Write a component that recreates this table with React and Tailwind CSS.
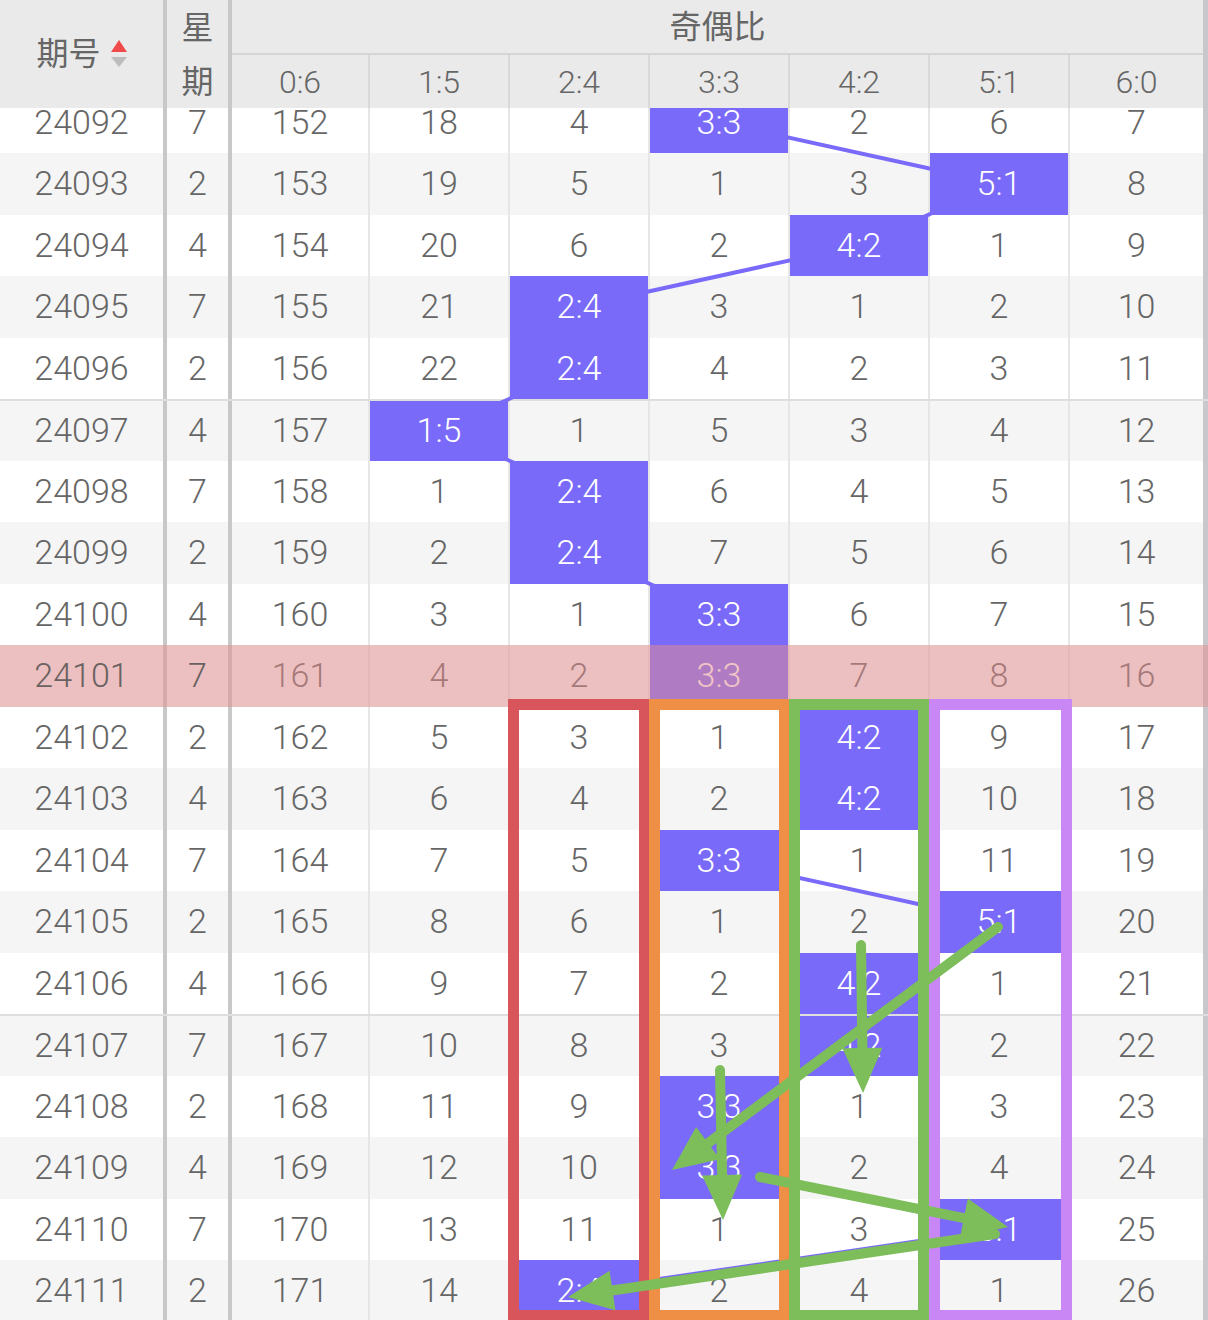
import React from "react";

const labels = ["0:6", "1:5", "2:4", "3:3", "4:2", "5:1", "6:0"];

// [期号, 星期, 命中列, 各列遗漏值]
const rows = [
    [24092, 7, 3, [152, 18, 4, 0, 2, 6, 7]],
    [24093, 2, 5, [153, 19, 5, 1, 3, 0, 8]],
    [24094, 4, 4, [154, 20, 6, 2, 0, 1, 9]],
    [24095, 7, 2, [155, 21, 0, 3, 1, 2, 10]],
    [24096, 2, 2, [156, 22, 0, 4, 2, 3, 11]],
    [24097, 4, 1, [157, 0, 1, 5, 3, 4, 12]],
    [24098, 7, 2, [158, 1, 0, 6, 4, 5, 13]],
    [24099, 2, 2, [159, 2, 0, 7, 5, 6, 14]],
    [24100, 4, 3, [160, 3, 1, 0, 6, 7, 15]],
    [24101, 7, 3, [161, 4, 2, 0, 7, 8, 16]],
    [24102, 2, 4, [162, 5, 3, 1, 0, 9, 17]],
    [24103, 4, 4, [163, 6, 4, 2, 0, 10, 18]],
    [24104, 7, 3, [164, 7, 5, 0, 1, 11, 19]],
    [24105, 2, 5, [165, 8, 6, 1, 2, 0, 20]],
    [24106, 4, 4, [166, 9, 7, 2, 0, 1, 21]],
    [24107, 7, 4, [167, 10, 8, 3, 0, 2, 22]],
    [24108, 2, 3, [168, 11, 9, 0, 1, 3, 23]],
    [24109, 4, 3, [169, 12, 10, 0, 2, 4, 24]],
    [24110, 7, 5, [170, 13, 11, 1, 3, 0, 25]],
    [24111, 2, 2, [171, 14, 0, 2, 4, 1, 26]],
];

const colW = ["w-[138px]", "w-[140px]", "w-[140px]", "w-[140px]", "w-[140px]", "w-[140px]", "w-[133px]"];
const colCenter = [301, 439, 579, 719, 859, 999, 1136];
const ROW_H = 61.5;
const FIRST_TOP = 91.5;
const rowCenter = (k) => FIRST_TOP + ROW_H * k + ROW_H / 2;

function SortIcon() {
    return (
        <svg width="16" height="28" viewBox="0 0 16 28">
            <polygon points="8,0 16,12 0,12" fill="#f04a4a"/>
            <polygon points="0,17 16,17 8,27" fill="#bdbdbd"/>
        </svg>
    );
}

function Header() {
    return (
        <div className="flex h-[108px] bg-[#eaeaea] text-[#666] text-[32px] font-normal">
            <div className="w-[167px] border-r-4 border-[#c8c8c8] flex items-center justify-center gap-[10px]">
                <span>期号</span>
                <SortIcon/>
            </div>
            <div className="w-[65px] border-r-4 border-[#c8c8c8] flex flex-col">
                <div className="h-[55px] flex items-center justify-center">星</div>
                <div className="h-[53px] flex items-center justify-center">期</div>
            </div>
            <div className="w-[971px] flex flex-col">
                <div className="h-[55px] border-b-2 border-[#d6d6d6] flex items-center justify-center">奇偶比</div>
                <div className="h-[53px] flex font-light">
                    {labels.map((l, i) => (
                        <div key={l}
                             className={`${colW[i]} ${i < 6 ? "border-r-2 border-[#d9d9d9]" : ""} flex items-center justify-center`}>
                            {l}
                        </div>
                    ))}
                </div>
            </div>
            <div className="w-[5px] bg-[#c8c8cc]"/>
        </div>
    );
}

function Row({row, k}) {
    const [issue, week, hit, vals] = row;
    const striped = k % 2 === 1;
    const divider = k === 5 || k === 15;
    const marked = issue === 24101;
    return (
        <div className={`relative flex h-[61.5px] ${striped ? "bg-[#f5f5f5]" : "bg-white"} ${divider ? "border-t-2 border-[#dedede]" : ""}`}>
            <div className="w-[167px] border-r-4 border-[#c8c8c8] flex items-center justify-center">
                <span className={marked ? "relative z-40 text-[#6a6262]" : ""}>{issue}</span>
            </div>
            <div className="w-[65px] border-r-4 border-[#c8c8c8] flex items-center justify-center">
                <span className={marked ? "relative z-40 text-[#6a6262]" : ""}>{week}</span>
            </div>
            {vals.map((v, i) => (
                <div key={i} className={`${colW[i]} ${i < 6 ? "border-r-2 border-[#e6e6e6]" : ""} flex`}>
                    {i === hit ? (
                        <div className="relative z-20 flex-1 flex items-center justify-center bg-[#7a6afa] text-white">
                            {labels[i]}
                        </div>
                    ) : (
                        <div className="flex-1 flex items-center justify-center">{v}</div>
                    )}
                </div>
            ))}
            <div className="w-[5px] bg-[#c8c8cc]"/>
            {marked && (
                <div className="absolute inset-0 z-30 bg-[rgba(228,140,140,0.5)] pointer-events-none"/>
            )}
        </div>
    );
}

function TrendLine() {
    const segs = [];
    for (let k = 1; k < rows.length; k++) {
        const a = rows[k - 1][2];
        const b = rows[k][2];
        if (a !== b) {
            segs.push(<line key={k} x1={colCenter[a]} y1={rowCenter(k - 1)} x2={colCenter[b]} y2={rowCenter(k)}
                            stroke="#7a6afa" strokeWidth="4"/>);
        }
    }
    return (
        <svg className="absolute left-0 top-0 z-10 pointer-events-none" width="1208" height="1320">
            {segs}
        </svg>
    );
}

function Arrow({x1, y1, x2, y2}) {
    const len = Math.hypot(x2 - x1, y2 - y1);
    const ux = (x2 - x1) / len;
    const uy = (y2 - y1) / len;
    const L = 45, W = 20;
    const bx = x2 - ux * L, by = y2 - uy * L;
    const pts = `${x2},${y2} ${bx - uy * W},${by + ux * W} ${bx + uy * W},${by - ux * W}`;
    return (
        <g>
            <line x1={x1} y1={y1} x2={bx + ux * 4} y2={by + uy * 4} stroke="#7dbd5a" strokeWidth="10" strokeLinecap="round"/>
            <polygon points={pts} fill="#7dbd5a"/>
        </g>
    );
}

function Annotations() {
    return (
        <>
            <div className="absolute left-[508px] top-[699px] w-[142px] h-[622px] border-[11px] border-[#d9555c] z-40 pointer-events-none"/>
            <div className="absolute left-[649px] top-[699px] w-[141px] h-[622px] border-[11px] border-[#ee8f45] z-40 pointer-events-none"/>
            <div className="absolute left-[789px] top-[699px] w-[140px] h-[622px] border-[11px] border-[#7dbd5a] z-40 pointer-events-none"/>
            <div className="absolute left-[929px] top-[699px] w-[143px] h-[622px] border-[11px] border-[#c987f5] z-40 pointer-events-none"/>
            <svg className="absolute left-0 top-0 z-50 pointer-events-none" width="1208" height="1320">
                <Arrow x1={861} y1={945} x2={863} y2={1093}/>
                <Arrow x1={998} y1={927} x2={672} y2={1170}/>
                <Arrow x1={720} y1={1070} x2={723} y2={1220}/>
                <Arrow x1={760} y1={1177} x2={1008} y2={1227}/>
                <Arrow x1={995} y1={1234} x2={568} y2={1297}/>
            </svg>
        </>
    );
}

export default function App() {
    return (
        <div className="relative w-[1208px] h-[1320px] overflow-hidden bg-white text-[#666] font-light font-['Roboto','Noto_Sans_CJK_SC',sans-serif]">
            <Header/>
            <div className="h-[1212px] overflow-hidden text-[34px]">
                <div className="mt-[-16.5px]">
                    {rows.map((r, k) => <Row key={r[0]} row={r} k={k}/>)}
                </div>
            </div>
            <TrendLine/>
            <Annotations/>
        </div>
    );
}
